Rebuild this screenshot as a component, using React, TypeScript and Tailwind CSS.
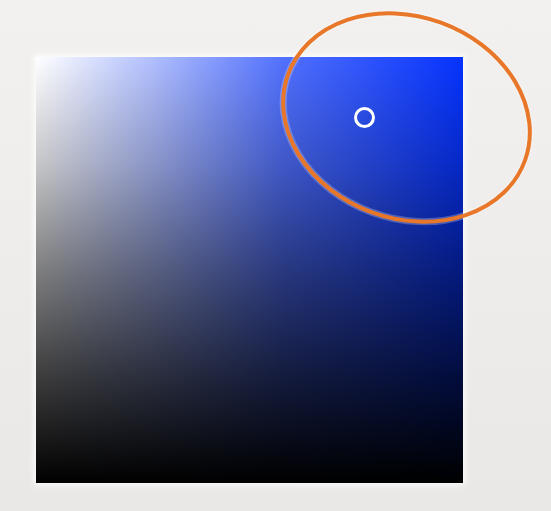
import React from "react";

export default function App() {
  return (
    <div className="relative w-[551px] h-[511px] overflow-hidden bg-gradient-to-b from-[#f2f1ef] to-[#e9e8e6] pt-[57px] pl-[36px]" style={{ fontFamily: "Inter, sans-serif" }}>
      <div className="relative w-[427px] h-[426px] bg-[#0633ff] shadow-[0_0_6px_2px_rgba(255,255,255,0.85)]">
        <div className="absolute inset-0 bg-[linear-gradient(to_right,#ffffff_0%,rgba(255,255,255,0.68)_28%,rgba(255,255,255,0.3)_58%,rgba(255,255,255,0)_100%)]" />
        <div className="absolute inset-0 bg-[linear-gradient(to_bottom,rgba(0,0,0,0)_0%,rgba(0,0,0,0.22)_25%,rgba(0,0,0,0.5)_50%,rgba(0,0,0,0.76)_75%,#000000_100%)]" />
        <div className="absolute left-[318px] top-[50px] w-[21px] h-[21px] rounded-full border-[3px] border-white" />
      </div>
      <svg className="absolute left-0 top-0 pointer-events-none" width="551" height="511" viewBox="0 0 551 511">
        <ellipse
          cx="406.5"
          cy="117.5"
          rx="126"
          ry="101"
          transform="rotate(20 406.5 117.5)"
          fill="none"
          stroke="rgba(255,255,255,0.25)"
          strokeWidth="7"
        />
        <ellipse
          cx="406.5"
          cy="117.5"
          rx="126"
          ry="101"
          transform="rotate(20 406.5 117.5)"
          fill="none"
          stroke="#e8772a"
          strokeWidth="4"
        />
      </svg>
    </div>
  );
}
